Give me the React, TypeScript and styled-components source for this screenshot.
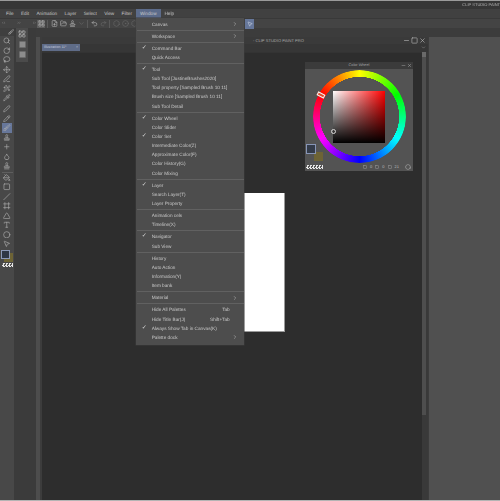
import React from "react";
import styled, { createGlobalStyle } from "styled-components";
import {
  Brush,
  ChevronDown,
  ChevronRight,
  Circle,
  CircleDot,
  Droplet,
  FilePlus,
  Frame,
  FolderOpen,
  Hexagon,
  Lasso,
  LayoutGrid,
  Minus,
  MousePointer2,
  Move,
  PaintBucket,
  Pen,
  PenLine,
  Pipette,
  Pencil,
  Plus,
  Redo2,
  RotateCw,
  Search,
  Slash,
  Square,
  Stamp,
  Triangle,
  Type,
  Undo2,
  Wand2,
  X,
} from "lucide-react";

const GlobalStyle = createGlobalStyle`
  html, body {
    margin: 0;
    padding: 0;
    background: #2d2d2d;
  }
`;

const Shell = styled.div`
  width: 500px;
  height: 501px;
  position: relative;
  display: flex;
  flex-direction: column;
  overflow: hidden;
  font-family: "Liberation Sans", Arial, sans-serif;
  text-rendering: geometricPrecision;
  color: #c8c8c8;
  filter: blur(0.35px);
`;

const TopEdge = styled.div`
  height: 1px;
  background: #9a9a9a;
`;

const BottomEdge = styled.div`
  height: 1px;
  background: #b4b4b4;
`;

const TitleBar = styled.div`
  height: 8px;
  background: #363636;
  display: flex;
  justify-content: flex-end;
  align-items: center;
`;

const AppName = styled.span`
  font-size: 4px;
  line-height: 8px;
  white-space: nowrap;
  color: #b4b4b4;
`;

const MenuBar = styled.div`
  height: 9px;
  background: #414141;
  display: flex;
  align-items: stretch;
  padding-left: 2.3px;
  position: relative;
  z-index: 5;
`;

const MenuItem = styled.div<{ $active?: boolean }>`
  position: relative;
  padding: 0 ${(p) => (p.$active ? "4.2px" : "3.7px")};
  font-size: 4.7px;
  line-height: 10px;
  color: #c8c8c8;
  background: ${(p) => (p.$active ? "#5c6b8a" : "transparent")};
`;

const Dropdown = styled.div`
  position: absolute;
  top: 9px;
  left: 0;
  width: 108px;
  padding: 1.5px 0 3px;
  background: #4d4d4d;
  box-shadow: 0 0 0 0.5px #3c3c3c;
`;

const DropRow = styled.div`
  height: 9.15px;
  display: grid;
  grid-template-columns: 16px 1fr auto 14px;
  align-items: center;
  font-size: 4.7px;
  line-height: 9.15px;
  color: #cacaca;
  white-space: nowrap;
  svg {
    width: 6px;
    height: 6px;
    margin-left: 2px;
    color: #bdbdbd;
  }
`;

const Check = styled.span`
  font-size: 6px;
  text-align: center;
  padding-left: 1px;
  color: #d8d8d8;
`;

const Shortcut = styled.span`
  text-align: right;
`;

const DropSep = styled.div`
  height: 1px;
  margin: 1px 0 1px 1px;
  background: #616161;
`;

const CommandBar = styled.div`
  height: 10px;
  background: #444444;
  border-top: 0.5px solid #393939;
  box-sizing: border-box;
  display: flex;
  align-items: center;
  position: relative;
  padding-left: 37px;
  gap: 1px;
`;

const CmdIcon = styled.span<{ $dim?: boolean; $on?: boolean }>`
  width: 8px;
  height: 8px;
  display: flex;
  align-items: center;
  justify-content: center;
  color: ${(p) => (p.$dim ? "#6a6a6a" : "#b8b8b8")};
  background: ${(p) => (p.$on ? "#5e5e5e" : "transparent")};
  svg {
    width: 7px;
    height: 7px;
  }
`;

const CmdSep = styled.span`
  width: 1px;
  height: 8px;
  background: #5a5a5a;
  margin: 0 1px;
`;

const CollapseMarks = styled.span`
  position: absolute;
  top: 0;
  left: 2px;
  width: 34px;
  display: flex;
  justify-content: space-between;
  font-size: 5px;
  line-height: 9px;
  color: #777777;
`;

const BlueButton = styled.span`
  position: absolute;
  left: 245px;
  top: 0;
  width: 9px;
  height: 10px;
  background: #66779a;
  display: flex;
  align-items: center;
  justify-content: center;
  color: #d6dcea;
  svg {
    width: 6px;
    height: 6px;
  }
`;

const Workspace = styled.div`
  flex: 1;
  display: flex;
  min-height: 0;
`;

const ToolColumn = styled.div`
  width: 14px;
  background: #484848;
  display: flex;
  flex-direction: column;
  align-items: center;
  box-sizing: border-box;
`;

const ToolHead = styled.div`
  width: 14px;
  height: 8px;
  background: #3f3f3f;
  display: flex;
  justify-content: flex-end;
  align-items: center;
  color: #c2c2c2;
  svg {
    width: 6px;
    height: 6px;
  }
`;

const ToolButton = styled.div<{ $on?: boolean; $gap?: number }>`
  width: 10px;
  height: 9.5px;
  flex: none;
  margin-top: ${(p) => p.$gap || 0}px;
  display: flex;
  align-items: center;
  justify-content: center;
  color: #b0b0b0;
  background: ${(p) => (p.$on ? "#67779a" : "transparent")};
  svg {
    width: 7.5px;
    height: 7.5px;
  }
`;

const ToolSep = styled.div`
  width: 11px;
  height: 1px;
  margin-top: 1px;
  background: #5e5e5e;
`;

const MainSwatch = styled.div`
  width: 7px;
  height: 7px;
  flex: none;
  margin-top: 1px;
  margin-right: 3px;
  background: #2f3746;
  border: 1px solid #8c99b8;
  box-shadow: 3px 3px 0 #6d6335;
`;

const Checker = styled.div<{ $w: number }>`
  width: ${(p) => p.$w}px;
  height: 4px;
  flex: none;
  background: repeating-conic-gradient(#e6e6e6 0 25%, #555555 0 50%) 0 0 / 3px 3px;
`;

const ToolChecker = styled(Checker)`
  margin-top: 4px;
`;

const SubColumn = styled.div`
  width: 22px;
  background: #3b3b3b;
  padding-left: 2px;
  box-sizing: border-box;
`;

const SubPanel = styled.div`
  width: 12px;
  height: 32px;
  padding: 1px 0;
  background: #4b4b4b;
  display: flex;
  flex-direction: column;
  align-items: center;
  gap: 1px;
`;

const SubButton = styled.div`
  width: 9px;
  height: 9.5px;
  display: flex;
  align-items: center;
  justify-content: center;
  color: #bcbcbc;
  svg {
    width: 8px;
    height: 8px;
  }
`;

const SubBlock = styled.span`
  width: 7px;
  height: 7px;
  border-radius: 1px;
  background: #8d8d8d;
  border: 1px solid #6c6c6c;
  box-sizing: border-box;
`;

const RightArea = styled.div`
  flex: 1;
  display: flex;
  flex-direction: column;
  min-width: 0;
`;

const Band = styled.div`
  height: 9px;
  background: #3c3c3c;
`;

const DocRow = styled.div`
  flex: 1;
  display: flex;
  min-height: 0;
  background: #3c3c3c;
`;

const Splitter = styled.div`
  width: 4px;
  margin-right: 2px;
  background: #4d4d4d;
`;

const DocWindow = styled.div`
  width: 386px;
  display: flex;
  flex-direction: column;
`;

const DocTitle = styled.div`
  height: 7px;
  background: #3a3a3a;
  display: flex;
  align-items: center;
  padding-left: 211px;
  font-size: 4.1px;
  color: #a8a8a8;
  white-space: nowrap;
`;

const WinControls = styled.div`
  margin-left: auto;
  display: flex;
  gap: 1px;
  padding-right: 2px;
  color: #bdbdbd;
  svg {
    width: 7px;
    height: 7px;
  }
`;

const TabRow = styled.div`
  height: 8px;
  background: #363636;
  display: flex;
  justify-content: space-between;
  color: #a8a8a8;
  svg {
    width: 5px;
    height: 5px;
    margin: 1px 2px 0 0;
  }
`;

const DocTab = styled.div`
  width: 38px;
  height: 7px;
  background: #5f6c88;
  font-size: 3.6px;
  line-height: 7px;
  color: #c4cada;
  display: flex;
  justify-content: space-between;
  padding: 0 2px;
  box-sizing: border-box;
`;

const DocBody = styled.div`
  flex: 1;
  display: flex;
  min-height: 0;
`;

const Canvas = styled.div`
  flex: 1;
  position: relative;
  background: #2d2d2d;
  border-top: 1px solid #333333;
  box-sizing: border-box;
`;

const Paper = styled.div`
  position: absolute;
  left: 110px;
  top: 140px;
  width: 132px;
  height: 138px;
  background: #ffffff;
  border-right: 0.5px solid #9a9a9a;
  border-bottom: 0.5px solid #9a9a9a;
`;

const Scrollbar = styled.div`
  width: 6px;
  display: flex;
  flex-direction: column;
  background: #393939;
`;

const ScrollButton = styled.div`
  width: 4px;
  height: 5px;
  background: #6a6a6a;
`;

const ScrollThumb = styled.div`
  width: 4px;
  height: 358px;
  background: #4e4e4e;
`;

const RightPanel = styled.div`
  flex: 1;
  background: #505050;
  border-left: 1px solid #3c3c3c;
`;

const Palette = styled.div`
  position: absolute;
  left: 305px;
  top: 62px;
  width: 108px;
  height: 109px;
  background: #535353;
  display: flex;
  flex-direction: column;
  align-items: center;
`;

const PaletteTitle = styled.div`
  width: 100%;
  height: 7px;
  background: #3b3b3b;
  position: relative;
  font-size: 3.8px;
  line-height: 7px;
  text-align: center;
  color: #a2a2a2;
  svg {
    position: absolute;
    top: 1px;
    width: 5px;
    height: 5px;
    color: #b4b4b4;
  }
`;

const Wheel = styled.div`
  margin-top: 1px;
  width: 93px;
  height: 93px;
  position: relative;
  display: grid;
  place-items: center;
`;

const Ring = styled.div`
  position: absolute;
  inset: 0;
  border-radius: 50%;
  background: conic-gradient(#ffff00, #00ff00 60deg, #00ffff 120deg, #0000ff 180deg, #ff00ff 240deg, #ff0000 300deg, #ffff00 360deg);
  -webkit-mask: radial-gradient(circle closest-side, transparent 85%, #000 85.6%);
  mask: radial-gradient(circle closest-side, transparent 85%, #000 85.6%);
`;

const ColorSquare = styled.div`
  position: relative;
  width: 52px;
  height: 52px;
  background: linear-gradient(to bottom, transparent, #000000), linear-gradient(to right, #ffffff, #ff0000);
`;

const HueMarker = styled.div`
  position: absolute;
  left: 4.5px;
  top: 23px;
  width: 8px;
  height: 4px;
  box-sizing: border-box;
  border: 1px solid #f2f2f2;
  background: #e24a2a;
  transform: rotate(28deg);
`;

const ValueCursor = styled.div`
  position: absolute;
  left: -2px;
  bottom: 9px;
  width: 3px;
  height: 3px;
  border: 0.5px solid #d8d8d8;
  border-radius: 50%;
`;

const ForeSwatch = styled.div`
  position: absolute;
  left: 1px;
  top: 82px;
  width: 10px;
  height: 10px;
  box-sizing: border-box;
  border: 1px solid #8795b6;
  background: #333b49;
  z-index: 1;
`;

const BackSwatch = styled.div`
  position: absolute;
  left: 9px;
  top: 90px;
  width: 9px;
  height: 9px;
  background: #6d6335;
`;

const PaletteFooter = styled.div`
  width: 100%;
  margin-top: 1px;
  padding: 0 2px 0 1px;
  box-sizing: border-box;
  display: flex;
  align-items: center;
  justify-content: space-between;
`;

const Stats = styled.div`
  display: flex;
  align-items: center;
  gap: 3px;
  font-size: 4px;
  line-height: 6px;
  color: #bcbcbc;
  svg {
    width: 4px;
    height: 4px;
  }
`;

const Dial = styled.span`
  display: flex;
  margin-left: 3px;
  svg {
    width: 6px;
    height: 6px;
  }
`;

type MenuEntry = { label?: string; checked?: boolean; shortcut?: string; sub?: boolean };

const windowMenu: MenuEntry[] = [
  { label: "Canvas", sub: true },
  {},
  { label: "Workspace", sub: true },
  {},
  { label: "Command Bar", checked: true },
  { label: "Quick Access" },
  {},
  { label: "Tool", checked: true },
  { label: "Sub Tool [JustineBrushes2020]" },
  { label: "Tool property [Sampled Brush 10 11]" },
  { label: "Brush size [Sampled Brush 10 11]" },
  { label: "Sub Tool Detail" },
  {},
  { label: "Color Wheel", checked: true },
  { label: "Color Slider" },
  { label: "Color Set", checked: true },
  { label: "Intermediate Color(Z)" },
  { label: "Approximate Color(F)" },
  { label: "Color History(G)" },
  { label: "Color Mixing" },
  {},
  { label: "Layer", checked: true },
  { label: "Search Layer(T)" },
  { label: "Layer Property" },
  {},
  { label: "Animation cels" },
  { label: "Timeline(X)" },
  {},
  { label: "Navigator", checked: true },
  { label: "Sub View" },
  {},
  { label: "History" },
  { label: "Auto Action" },
  { label: "Information(Y)" },
  { label: "Item bank" },
  {},
  { label: "Material", sub: true },
  {},
  { label: "Hide All Palettes", shortcut: "Tab" },
  { label: "Hide Title Bar(J)", shortcut: "Shift+Tab" },
  { label: "Always Show Tab in Canvas(K)", checked: true },
  { label: "Palette dock", sub: true },
];

const menuNames = ["File", "Edit", "Animation", "Layer", "Select", "View", "Filter"];

const upperTools = [Search, RotateCw, Lasso, Move, PenLine, Wand2, Pipette];
const drawTools = [Pen, Pencil];
const fillTools = [Stamp, Plus, Droplet, Stamp];
const shapeTools = [PaintBucket, Square, Slash, Frame, Triangle, Type, Circle, MousePointer2];

export default function App() {
  return (
    <Shell>
      <GlobalStyle />
      <TopEdge />
      <TitleBar>
        <AppName>CLIP STUDIO PAINT</AppName>
      </TitleBar>
      <MenuBar>
        {menuNames.map((name) => (
          <MenuItem key={name}>{name}</MenuItem>
        ))}
        <MenuItem $active>
          Window
          <Dropdown>
            {windowMenu.map((entry, i) =>
              entry.label ? (
                <DropRow key={i}>
                  <Check>{entry.checked ? "✓" : ""}</Check>
                  <span>{entry.label}</span>
                  <Shortcut>{entry.shortcut}</Shortcut>
                  {entry.sub ? <ChevronRight /> : <span />}
                </DropRow>
              ) : (
                <DropSep key={i} />
              )
            )}
          </Dropdown>
        </MenuItem>
        <MenuItem>Help</MenuItem>
      </MenuBar>
      <CommandBar>
        <CollapseMarks>
          <span>‹‹</span>
          <span>››</span>
          <span>››</span>
        </CollapseMarks>
        <CmdIcon $on><LayoutGrid /></CmdIcon>
        <CmdSep />
        <CmdIcon><FilePlus /></CmdIcon>
        <CmdIcon><FolderOpen /></CmdIcon>
        <CmdIcon><Stamp /></CmdIcon>
        <CmdIcon $dim><ChevronDown /></CmdIcon>
        <CmdSep />
        <CmdIcon><Undo2 /></CmdIcon>
        <CmdIcon $dim><Redo2 /></CmdIcon>
        <CmdSep />
        <CmdIcon $dim><Hexagon /></CmdIcon>
        <CmdIcon $dim><CircleDot /></CmdIcon>
        <CmdIcon $dim><Hexagon /></CmdIcon>
        <BlueButton><MousePointer2 /></BlueButton>
      </CommandBar>
      <Workspace>
        <ToolColumn>
          <ToolHead><Brush /></ToolHead>
          {upperTools.map((Icon, i) => (
            <ToolButton key={i}><Icon /></ToolButton>
          ))}
          {drawTools.map((Icon, i) => (
            <ToolButton key={i} $gap={i === 0 ? 1.5 : 0}><Icon /></ToolButton>
          ))}
          <ToolButton $on><Brush /></ToolButton>
          {fillTools.map((Icon, i) => (
            <ToolButton key={i}><Icon /></ToolButton>
          ))}
          <ToolSep />
          {shapeTools.map((Icon, i) => (
            <ToolButton key={i}><Icon /></ToolButton>
          ))}
          <MainSwatch />
          <ToolChecker $w={11} />
        </ToolColumn>
        <SubColumn>
          <SubPanel>
            <SubButton><LayoutGrid /></SubButton>
            <SubButton><SubBlock /></SubButton>
            <SubButton><SubBlock /></SubButton>
          </SubPanel>
        </SubColumn>
        <RightArea>
          <Band />
          <DocRow>
            <Splitter />
            <DocWindow>
              <DocTitle>
                - CLIP STUDIO PAINT PRO
                <WinControls>
                  <Minus />
                  <Square />
                  <X />
                </WinControls>
              </DocTitle>
              <TabRow>
                <DocTab>
                  <span>Illustration 11*</span>
                  <span>×</span>
                </DocTab>
                <ChevronDown />
              </TabRow>
              <DocBody>
                <Canvas>
                  <Paper />
                </Canvas>
                <Scrollbar>
                  <ScrollButton />
                  <ScrollThumb />
                </Scrollbar>
              </DocBody>
            </DocWindow>
            <RightPanel />
          </DocRow>
        </RightArea>
      </Workspace>
      <BottomEdge />
      <Palette>
        <PaletteTitle>
          Color Wheel
          <Minus style={{ right: 7 }} />
          <X style={{ right: 1 }} />
        </PaletteTitle>
        <Wheel>
          <Ring />
          <ColorSquare>
            <ValueCursor />
          </ColorSquare>
          <HueMarker />
        </Wheel>
        <ForeSwatch />
        <BackSwatch />
        <PaletteFooter>
          <Checker $w={17} />
          <Stats>
            <Square />
            <span>0</span>
            <Square />
            <span>0</span>
            <Square />
            <span>21</span>
            <Dial><Hexagon /></Dial>
          </Stats>
        </PaletteFooter>
      </Palette>
    </Shell>
  );
}
